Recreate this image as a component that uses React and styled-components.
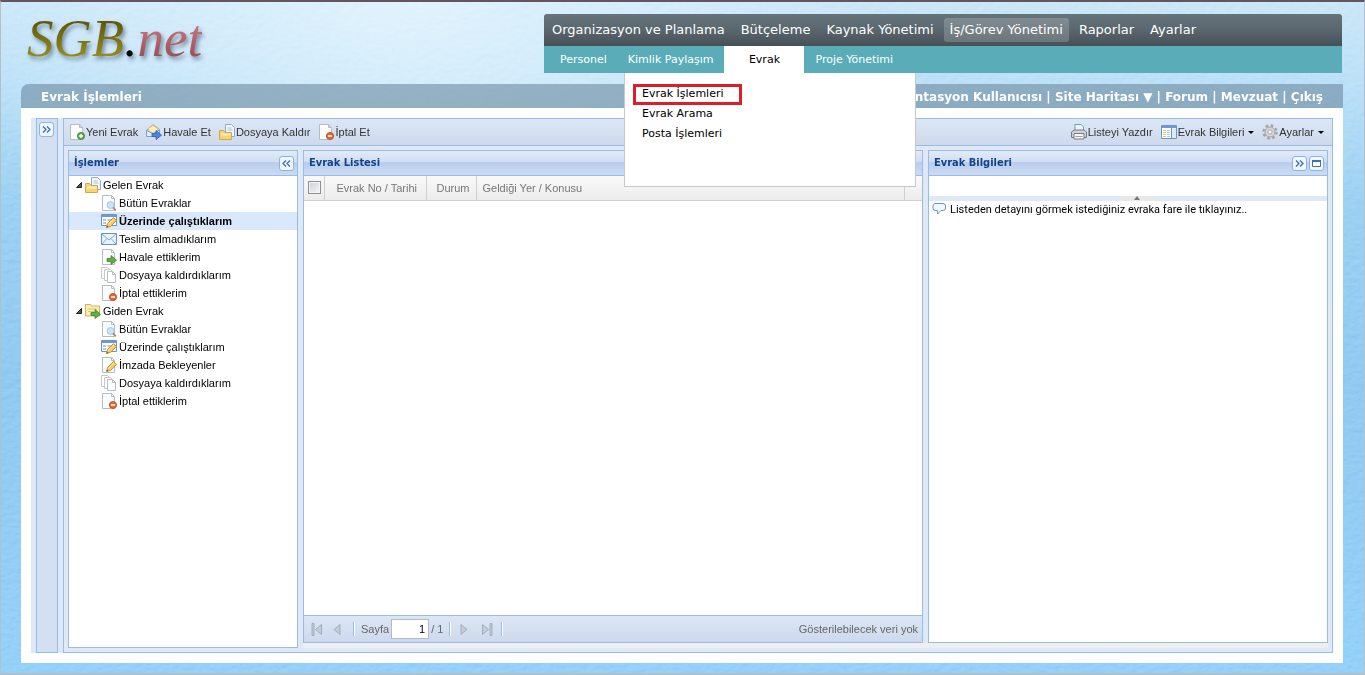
import React from 'react';
import styled, { createGlobalStyle, css } from 'styled-components';

const ARIAL = '"Liberation Sans", Arial, sans-serif';
const VERDANA = 'Verdana, "DejaVu Sans", sans-serif';
const TAHOMA = 'Tahoma, "DejaVu Sans Condensed", "DejaVu Sans", sans-serif';
const LINE = '#99bbe8';
const PALE = '#dfe8f6';

const GlobalStyle = createGlobalStyle`
  *, *::before, *::after { box-sizing: border-box; }
  body { margin: 0; font: 11px/18px ${ARIAL}; color: #000; background: #8bcbf3; }
  a { color: inherit; text-decoration: none; }
  ul { margin: 0; padding: 0; list-style: none; }
  button { border: 0; padding: 0; background: none; font: inherit; color: inherit; cursor: pointer; }
  svg { display: block; flex: none; }
`;

/* ---------- page frame ---------- */

const Page = styled.div`
  position: relative;
  isolation: isolate;
  display: flex;
  flex-direction: column;
  min-height: 100vh;
  padding: 12px 21px 10px 20px;
  border: 1px solid #b4c0c8;
  border-top: 2px solid #64545f;
  border-bottom: 2px solid #b4c0c8;
  background:
    radial-gradient(ellipse 460px 280px at 30% 0, rgba(222, 242, 253, 0.9), rgba(222, 242, 253, 0)),
    linear-gradient(#c3e3f7 0, #b2dcf6 80px, #8fcaf1 200px, #82c2ee 380px, #86caf8 100%);
`;

const Texture = styled.svg`
  position: absolute;
  inset: 0;
  width: 100%;
  height: 100%;
  z-index: -1;
  mix-blend-mode: soft-light;
  opacity: 0.5;
`;

const Header = styled.header`
  display: flex;
  align-items: flex-start;
  height: 70px;
  padding-right: 1px;
`;

const Logo = styled.a`
  flex: 0 0 523px;
  padding-left: 6px;
  font: italic 53px/48px "Liberation Serif", "Times New Roman", serif;
  filter: drop-shadow(2px 3px 2px rgba(50, 70, 90, 0.6));
`;

const LogoPart = styled.span`
  color: transparent;
  background: linear-gradient(${(p) => p.$from}, ${(p) => p.$to});
  background-clip: text;
`;

const Nav = styled.nav`
  position: relative;
  flex: 1;
  font-family: ${VERDANA};
  color: #fff;
  white-space: nowrap;
`;

const MainMenu = styled.ul`
  display: flex;
  align-items: center;
  gap: 4px;
  height: 32px;
  padding-left: 2px;
  border-radius: 3px 3px 0 0;
  background: linear-gradient(#65737a, #5b686f 45%, #465157);
`;

const MainLink = styled.a`
  display: block;
  padding: 0 6px;
  border-radius: 3px;
  font-size: 13px;
  line-height: 24px;
  background: ${(p) => (p.$active ? 'linear-gradient(#808c91, #6c777c)' : 'none')};
`;

const SubMenu = styled.ul`
  display: flex;
  gap: 1px;
  height: 27px;
  padding-left: 6px;
  background: #5aadb8;
`;

const SubLink = styled.a`
  display: block;
  padding: 0 10px;
  font-size: 11px;
  line-height: 27px;
  text-align: center;
  ${(p) => p.$active && css`
    width: 80px;
    color: #000;
    background: #fff;
  `}
`;

const DropMenu = styled.ul`
  position: absolute;
  z-index: 5;
  top: 59px;
  left: 80px;
  display: flex;
  flex-direction: column;
  align-items: flex-start;
  gap: 5px;
  width: 292px;
  height: 114px;
  padding: 14px 11px;
  border: 1px solid #c8c8c8;
  border-top: 0;
  background: #fff;
  color: #000;
`;

const DropLink = styled.a`
  display: block;
  width: 103px;
  height: 15px;
  padding-left: 6px;
  font-size: 11px;
  line-height: 13px;
  outline: ${(p) => (p.$marked ? '3px solid #d9202a' : 'none')};
`;

const TitleBar = styled.div`
  display: flex;
  justify-content: space-between;
  height: 24px;
  padding: 0 20px;
  border-radius: 8px 0 0 0;
  background: rgba(112, 140, 162, 0.62);
  color: #fff;
  font: bold 12px/26px ${VERDANA};
  white-space: nowrap;
`;

const Title = styled.h1`
  margin: 0;
  font: inherit;
`;

const Sheet = styled.main`
  flex: 1;
  display: flex;
  padding: 10px;
  background: #fff;
`;

/* ---------- workspace ---------- */

const Workspace = styled.div`
  flex: 1;
  display: flex;
  gap: 5px;
  min-width: 0;
  padding-left: 5px;
  background: ${PALE};
`;

const CollapsedRail = styled.aside`
  width: 22px;
  padding: 3px 2px;
  border: 1px solid ${LINE};
  background: #d2e0f2;
`;

const MainArea = styled.section`
  flex: 1;
  min-width: 0;
  display: flex;
  flex-direction: column;
  border: 1px solid ${LINE};
`;

const Toolbar = styled.div`
  display: flex;
  align-items: center;
  gap: 8px;
  height: 27px;
  padding: 0 8px 0 5px;
  border-bottom: 1px solid ${LINE};
  background: linear-gradient(#dbe7f5, #ced9ec);
  color: #333;
`;

const ToolButton = styled.button`
  display: flex;
  align-items: center;
  gap: 1px;
  line-height: 20px;
  white-space: nowrap;
`;

const Spacer = styled.span`
  flex: 1;
`;

const Caret = styled.i`
  margin-left: 3px;
  border: 3px solid transparent;
  border-top: 3px solid #000;
  border-bottom: 0;
`;

const Panels = styled.div`
  flex: 1;
  display: flex;
  gap: 5px;
  padding: 4px;
`;

const Panel = styled.section`
  display: flex;
  flex-direction: column;
  flex: ${(p) => (p.$width ? `0 0 ${p.$width}px` : 1)};
  min-width: 0;
  border: 1px solid ${LINE};
  background: #fff;
`;

const PanelSlot = styled.div`
  flex: 1;
  display: flex;
  gap: 5px;
  min-width: 0;
  padding-bottom: 5px;
  background: linear-gradient(#efeff0, #efeff0) bottom / 100% 5px no-repeat;
`;

const PanelHead = styled.header`
  display: flex;
  align-items: center;
  gap: 2px;
  height: 25px;
  padding: 0 3px 0 5px;
  border-bottom: 1px solid ${LINE};
  background: linear-gradient(#e2ebf8, #d0def2 45%, #b9cdec 48%, #cbdbf3);
`;

const PanelTitle = styled.h2`
  flex: 1;
  margin: 0;
  color: #15428b;
  font: bold 11px/24px ${TAHOMA};
`;

const ToolBox = styled.button`
  display: grid;
  place-items: center;
  width: 15px;
  height: 15px;
  border: 1px solid #8fb4e0;
  border-radius: 3px;
  background: #f0f6fd;
`;

/* ---------- tree ---------- */

const Branch = styled.a`
  display: flex;
  align-items: center;
  gap: 2px;
  height: 18px;
  padding-left: 6px;
`;

const Leaf = styled.a`
  display: flex;
  align-items: center;
  gap: 2px;
  height: 18px;
  padding-left: 32px;
  ${(p) => p.$selected && css`
    background: #d9e8fb;
    font-weight: bold;
  `}
`;

/* ---------- list ---------- */

const Grid = styled.table`
  width: 100%;
  table-layout: fixed;
  border-collapse: collapse;
  color: #777;
`;

const HeadCell = styled.th`
  width: ${(p) => (p.$width ? `${p.$width}px` : 'auto')};
  height: 24px;
  padding: 0 0 0 ${(p) => p.$pad || 0}px;
  border-right: 1px solid #d0d0d0;
  border-bottom: 1px solid #d0d0d0;
  background: linear-gradient(#f9f9f9, #ececec);
  font-weight: normal;
  text-align: left;
  white-space: nowrap;
  &:last-child { border-right: 0; }
`;

const Tick = styled.input`
  appearance: none;
  display: block;
  width: 13px;
  height: 13px;
  margin: 0;
  border: 1px solid #8e8f8f;
  background: linear-gradient(135deg, #cbcfd5, #f6f6f6);
  box-shadow: inset 0 0 0 1px #f4f4f4;
`;

const GridBody = styled.div`
  flex: 1;
`;

const Pager = styled.footer`
  display: flex;
  align-items: center;
  height: 27px;
  padding: 0 4px 0 7px;
  border-top: 1px solid ${LINE};
  background: linear-gradient(#dbe7f5, #ced9ec);
  color: #666;
`;

const PagerButton = styled.button`
  width: ${(p) => p.$width}px;
  display: flex;
`;

const PageCount = styled.span`
  width: 18px;
`;

const Divider = styled.i`
  width: 2px;
  height: 14px;
  margin-right: 6px;
  border-left: 1px solid ${LINE};
  border-right: 1px solid #fff;
`;

const PageField = styled.input`
  width: 38px;
  height: 20px;
  margin: 0 2px;
  padding: 0 3px;
  border: 1px solid #b5b8c8;
  background: #fff;
  font: 11px ${ARIAL};
  text-align: right;
`;

/* ---------- detail ---------- */

const DetailBar = styled.div`
  display: flex;
  justify-content: center;
  align-items: flex-start;
  height: 5px;
  margin-top: 20px;
  padding-left: 18px;
  background: ${PALE};
`;

const Collapse = styled.button`
  display: flex;
  justify-content: center;
  width: 35px;
  height: 5px;
  background: #e8e8e8;
`;

const DetailText = styled.p`
  display: flex;
  align-items: center;
  gap: 2px;
  margin: 0;
  padding-left: 3px;
  font-family: Roboto, sans-serif;
`;

/* ---------- icons ---------- */

const Sheet16 = () => (
  <path d="M1.5.5h9l3 3v12h-12z M10.5.5v3h3" fill="#fcfdfe" stroke="#b4bcc4" />
);

const Minus = () => (
  <>
    <circle cx="12" cy="12" r="3.6" fill="#e8642c" stroke="#c24a18" strokeWidth=".8" />
    <path d="M10 12h4" stroke="#fff" strokeWidth="1.6" />
  </>
);

const Arrow = ({ fill, stroke }) => (
  <path d="M6 9.5h4v-3l5.5 4.7-5.5 4.3v-3H6z" fill={fill} stroke={stroke} strokeWidth=".8" />
);

const Pencil = () => (
  <>
    <path d="M5.5 14.5l1-4 6-6 3 3-6 6z" fill="#f9cb5e" stroke="#c08a2c" strokeWidth=".9" />
    <path d="M7.500 11.500l5.500-5.500" stroke="#fdeab0" />
    <path d="M5.500 14.500l.5-1.800 1.300 1.300z" fill="#5a4630" />
  </>
);

const DRAWINGS = {
  add: (
    <>
      <Sheet16 />
      <circle cx="12" cy="12" r="3.6" fill="#62a64a" stroke="#41803a" strokeWidth=".8" />
      <path d="M10 12h4M12 10v4" stroke="#fff" strokeWidth="1.4" />
    </>
  ),
  remove: (
    <>
      <Sheet16 />
      <Minus />
    </>
  ),
  forward: (
    <>
      <path d="M.6 6L7 .8l6.500 4.700v7H.6z" fill="#e6effa" stroke="#7d9ccb" />
      <path d="M2.500 6.500V4L7 1.500 11.800 4.500v2L7 9z" fill="#fdf0be" stroke="#dcb75c" strokeWidth=".8" />
      <path d="M.8 6.500L7 10l6.500-4" fill="none" stroke="#7d9ccb" />
      <Arrow fill="#4a86e4" stroke="#2a5fb8" />
    </>
  ),
  folderDoc: (
    <>
      <path d="M6.500.5h6l3 3v9h-9z" fill="#f2f7fd" stroke="#8fabd0" />
      <path d="M8.500 4h4M8.500 6h5" stroke="#a9c1e2" />
      <path d="M.5 6.500h4l1.500 2h6.500v7H.5z" fill="#f9d572" stroke="#d8a444" />
      <path d="M2 10.500h9.500" stroke="#fdf0c0" strokeWidth="2" />
    </>
  ),
  folderOut: (
    <>
      <path d="M.5 1.500h5l1 1.500h8v10H.5z" fill="#fbeeb4" stroke="#d8b050" />
      <path d="M3 6h9M3 8.500h6" stroke="#dfc272" />
      <Arrow fill="#62b044" stroke="#3a8430" />
    </>
  ),
  search: (
    <>
      <Sheet16 />
      <circle cx="9.500" cy="10" r="3.500" fill="#cde3f9" stroke="#a9c8e6" />
      <path d="M12 12.500l2.800 2.800" stroke="#a08c78" strokeWidth="1.800" />
    </>
  ),
  work: (
    <>
      <path d="M.5 1.500h15v11H.5z" fill="#fff" stroke="#6c92cc" />
      <path d="M1 3h14" stroke="#6f98da" strokeWidth="2" />
      <path d="M2 7h3M2 10h3M6.500 7h4" stroke="#94b6e2" strokeWidth="1.500" />
      <Pencil />
    </>
  ),
  mail: (
    <>
      <path d="M.5 2.500h15v11H.5z" fill="#e9f3fd" stroke="#5f93cf" />
      <path d="M1 3l7 6 7-6M1 13l5-5.500M15 13l-5-5.500" fill="none" stroke="#7ba8da" />
    </>
  ),
  sent: (
    <>
      <Sheet16 />
      <Arrow fill="#62b044" stroke="#3a8430" />
    </>
  ),
  copies: (
    <>
      <path d="M.5.5h6l2 2v9h-8z" fill="#fff" stroke="#c4c9ce" />
      <path d="M3.500 2.500h6l2 2v9h-8z" fill="#fff" stroke="#c4c9ce" />
      <path d="M6.500 4.500h5l3 3v8h-8z M11.500 4.500v3h3" fill="#fff" stroke="#b8bdc4" />
    </>
  ),
  sign: (
    <>
      <Sheet16 />
      <Pencil />
    </>
  ),
  printer: (
    <>
      <path d="M4 7V.5h6L12.500 3v4z" fill="#eef5fd" stroke="#6d9bd3" />
      <path d="M.5 8l2.500-2h10l2.500 2v5.500H.5z" fill="#cfd2d6" stroke="#777c83" />
      <path d="M3 9.500h10v5.500H3z" fill="#f4f4f4" stroke="#777c83" />
      <path d="M4.500 12.500h7" stroke="#9aa0a8" />
    </>
  ),
  details: (
    <>
      <path d="M.5 1.500h15v13H.5z" fill="#fff" stroke="#6c92cc" />
      <path d="M1 3h14" stroke="#6f98da" strokeWidth="2" />
      <path d="M10.500 4v10" stroke="#6c92cc" />
      <path d="M11 4.500h4v9.500h-4z" fill="#dbe9fa" />
      <path d="M2 6.500h3M2 8.500h3M2 10.500h3M2 12.500h3" stroke="#e3c670" />
      <path d="M6 6.500h3M6 8.500h3M6 10.500h3M6 12.500h3" stroke="#a8c6ea" />
    </>
  ),
  gear: (
    <>
      <circle cx="8" cy="8" r="6.500" fill="none" stroke="#a4a4a4" strokeWidth="2.400" strokeDasharray="2.550 2.550" />
      <circle cx="8" cy="8" r="5" fill="#d8d8d8" stroke="#a4a4a4" />
      <circle cx="8" cy="8" r="2.200" fill="#eef1f6" stroke="#a4a4a4" />
    </>
  ),
  bubble: (
    <path d="M3 1.500h8a2.500 2.500 0 0 1 2.500 2.500v2a2.500 2.500 0 0 1-2.500 2.500H9L5.500 12V8.500H3.500A2.500 2.500 0 0 1 1 6V4a2.500 2.500 0 0 1 2-2.500z" fill="#f1f7fe" stroke="#6f94c4" />
  ),
};

const Icon = ({ name }) => (
  <svg width="16" height="16" viewBox="0 0 16 16" aria-hidden="true">{DRAWINGS[name]}</svg>
);

const Chevrons = ({ left }) => (
  <svg width="9" height="7" viewBox="0 0 9 7" fill="none" stroke="#3e6fae" strokeWidth="1.300" aria-hidden="true">
    <path d={left ? 'M4 .5l-3 3 3 3M8 .5l-3 3 3 3' : 'M1 .5l3 3-3 3M5 .5l3 3-3 3'} />
  </svg>
);

const WindowMark = () => (
  <svg width="9" height="7" viewBox="0 0 9 7" aria-hidden="true">
    <path d="M.5.5h8v6h-8z" fill="#fff" stroke="#3e6fae" />
    <path d="M0 1h9" stroke="#3e6fae" strokeWidth="2" />
  </svg>
);

const Expander = () => (
  <svg width="8" height="8" viewBox="0 0 8 8" aria-hidden="true">
    <path d="M6.500 1.500v5h-5z" fill="#555" stroke="#222" />
  </svg>
);

const PagerMark = ({ bar, back }) => (
  <svg width="12" height="13" viewBox="0 0 12 13" aria-hidden="true">
    <g transform={back ? undefined : 'matrix(-1 0 0 1 12 0)'} fill="#c5ccd5" stroke="#98a3b1" strokeWidth=".8">
      {bar && <path d="M1 .5h2v12H1z" />}
      <path d={bar ? 'M10.500 1.500v10l-6-5z' : 'M8 1.500v10l-6-5z'} />
    </g>
  </svg>
);

/* ---------- data ---------- */

const MAIN_ITEMS = ['Organizasyon ve Planlama', 'Bütçeleme', 'Kaynak Yönetimi', 'İş/Görev Yönetimi', 'Raporlar', 'Ayarlar'];
const SUB_ITEMS = ['Personel', 'Kimlik Paylaşım', 'Evrak', 'Proje Yönetimi'];
const DROP_ITEMS = ['Evrak İşlemleri', 'Evrak Arama', 'Posta İşlemleri'];

const TREE = [
  {
    label: 'Gelen Evrak',
    icon: 'folderDoc',
    items: [
      ['search', 'Bütün Evraklar'],
      ['work', 'Üzerinde çalıştıklarım', true],
      ['mail', 'Teslim almadıklarım'],
      ['sent', 'Havale ettiklerim'],
      ['copies', 'Dosyaya kaldırdıklarım'],
      ['remove', 'İptal ettiklerim'],
    ],
  },
  {
    label: 'Giden Evrak',
    icon: 'folderOut',
    items: [
      ['search', 'Bütün Evraklar'],
      ['work', 'Üzerinde çalıştıklarım'],
      ['sign', 'İmzada Bekleyenler'],
      ['copies', 'Dosyaya kaldırdıklarım'],
      ['remove', 'İptal ettiklerim'],
    ],
  },
];

const Tool = ({ icon, menu, children }) => (
  <ToolButton type="button">
    <Icon name={icon} />
    {children}
    {menu && <Caret />}
  </ToolButton>
);

export default function App() {
  return (
    <>
      <GlobalStyle />
      <Page>
        <Texture aria-hidden="true">
          <filter id="paper" x="0" y="0" width="100%" height="100%">
            <feTurbulence type="fractalNoise" baseFrequency="0.12 0.2" numOctaves="3" seed="4" />
            <feDiffuseLighting lightingColor="#fff" surfaceScale="1">
              <feDistantLight azimuth="60" elevation="35" />
            </feDiffuseLighting>
          </filter>
          <rect width="100%" height="100%" filter="url(#paper)" />
        </Texture>

        <Header>
          <Logo href="#">
            <LogoPart $from="#4b4500" $to="#a89a22">SGB</LogoPart>
            <LogoPart $from="#000" $to="#000">.</LogoPart>
            <LogoPart $from="#d98a92" $to="#93414a">net</LogoPart>
          </Logo>
          <Nav>
            <MainMenu>
              {MAIN_ITEMS.map((t) => (
                <li key={t}><MainLink href="#" $active={t === 'İş/Görev Yönetimi'}>{t}</MainLink></li>
              ))}
            </MainMenu>
            <SubMenu>
              {SUB_ITEMS.map((t) => (
                <li key={t}><SubLink href="#" $active={t === 'Evrak'}>{t}</SubLink></li>
              ))}
            </SubMenu>
            <DropMenu>
              {DROP_ITEMS.map((t, i) => (
                <li key={t}><DropLink href="#" $marked={i === 0}>{t}</DropLink></li>
              ))}
            </DropMenu>
          </Nav>
        </Header>

        <TitleBar>
          <Title>Evrak İşlemleri</Title>
          <div>
            <a href="#">Dokümantasyon Kullanıcısı</a> | <a href="#">Site Haritası ▼</a> | <a href="#">Forum</a> | <a href="#">Mevzuat</a> | <a href="#">Çıkış</a>
          </div>
        </TitleBar>

        <Sheet>
          <Workspace>
            <CollapsedRail>
              <ToolBox type="button" aria-label="Genişlet"><Chevrons /></ToolBox>
            </CollapsedRail>
            <MainArea>
              <Toolbar>
                <Tool icon="add">Yeni Evrak</Tool>
                <Tool icon="forward">Havale Et</Tool>
                <Tool icon="folderDoc">Dosyaya Kaldır</Tool>
                <Tool icon="remove">İptal Et</Tool>
                <Spacer />
                <Tool icon="printer">Listeyi Yazdır</Tool>
                <Tool icon="details" menu>Evrak Bilgileri</Tool>
                <Tool icon="gear" menu>Ayarlar</Tool>
              </Toolbar>
              <Panels>
                <Panel $width={230}>
                  <PanelHead>
                    <PanelTitle>İşlemler</PanelTitle>
                    <ToolBox type="button" aria-label="Daralt"><Chevrons left /></ToolBox>
                  </PanelHead>
                  <ul>
                    {TREE.map((b) => (
                      <li key={b.label}>
                        <Branch href="#"><Expander /><Icon name={b.icon} />{b.label}</Branch>
                        <ul>
                          {b.items.map(([icon, label, selected]) => (
                            <li key={label}>
                              <Leaf href="#" $selected={selected}><Icon name={icon} />{label}</Leaf>
                            </li>
                          ))}
                        </ul>
                      </li>
                    ))}
                  </ul>
                </Panel>
                <PanelSlot>
                  <Panel>
                    <PanelHead>
                      <PanelTitle>Evrak Listesi</PanelTitle>
                    </PanelHead>
                    <Grid>
                      <thead>
                        <tr>
                          <HeadCell $width={20} $pad={4}><Tick type="checkbox" aria-label="Tümünü seç" /></HeadCell>
                          <HeadCell $width={102} $pad={12}>Evrak No / Tarihi</HeadCell>
                          <HeadCell $width={50} $pad={10}>Durum</HeadCell>
                          <HeadCell $pad={6}>Geldiği Yer / Konusu</HeadCell>
                          <HeadCell $width={18} />
                        </tr>
                      </thead>
                    </Grid>
                    <GridBody />
                    <Pager>
                      <PagerButton type="button" $width={21} aria-label="İlk sayfa"><PagerMark bar back /></PagerButton>
                      <PagerButton type="button" $width={21} aria-label="Önceki sayfa"><PagerMark back /></PagerButton>
                      <Divider />
                      <label htmlFor="page">Sayfa</label>
                      <PageField id="page" defaultValue="1" />
                      <PageCount>/ 1</PageCount>
                      <Divider />
                      <PagerButton type="button" $width={24} aria-label="Sonraki sayfa"><PagerMark /></PagerButton>
                      <PagerButton type="button" $width={20} aria-label="Son sayfa"><PagerMark bar /></PagerButton>
                      <Divider />
                      <Spacer />
                      <span>Gösterilebilecek veri yok</span>
                    </Pager>
                  </Panel>
                  <Panel $width={400}>
                    <PanelHead>
                      <PanelTitle>Evrak Bilgileri</PanelTitle>
                      <ToolBox type="button" aria-label="Daralt"><Chevrons /></ToolBox>
                      <ToolBox type="button" aria-label="Büyüt"><WindowMark /></ToolBox>
                    </PanelHead>
                    <DetailBar>
                      <Collapse type="button" aria-label="Kapat">
                        <svg width="6" height="4" viewBox="0 0 6 4" aria-hidden="true"><path d="M0 4l3-4 3 4z" fill="#777" /></svg>
                      </Collapse>
                    </DetailBar>
                    <DetailText>
                      <Icon name="bubble" />
                      Listeden detayını görmek istediğiniz evraka fare ile tıklayınız..
                    </DetailText>
                  </Panel>
                </PanelSlot>
              </Panels>
            </MainArea>
          </Workspace>
        </Sheet>
      </Page>
    </>
  );
}
